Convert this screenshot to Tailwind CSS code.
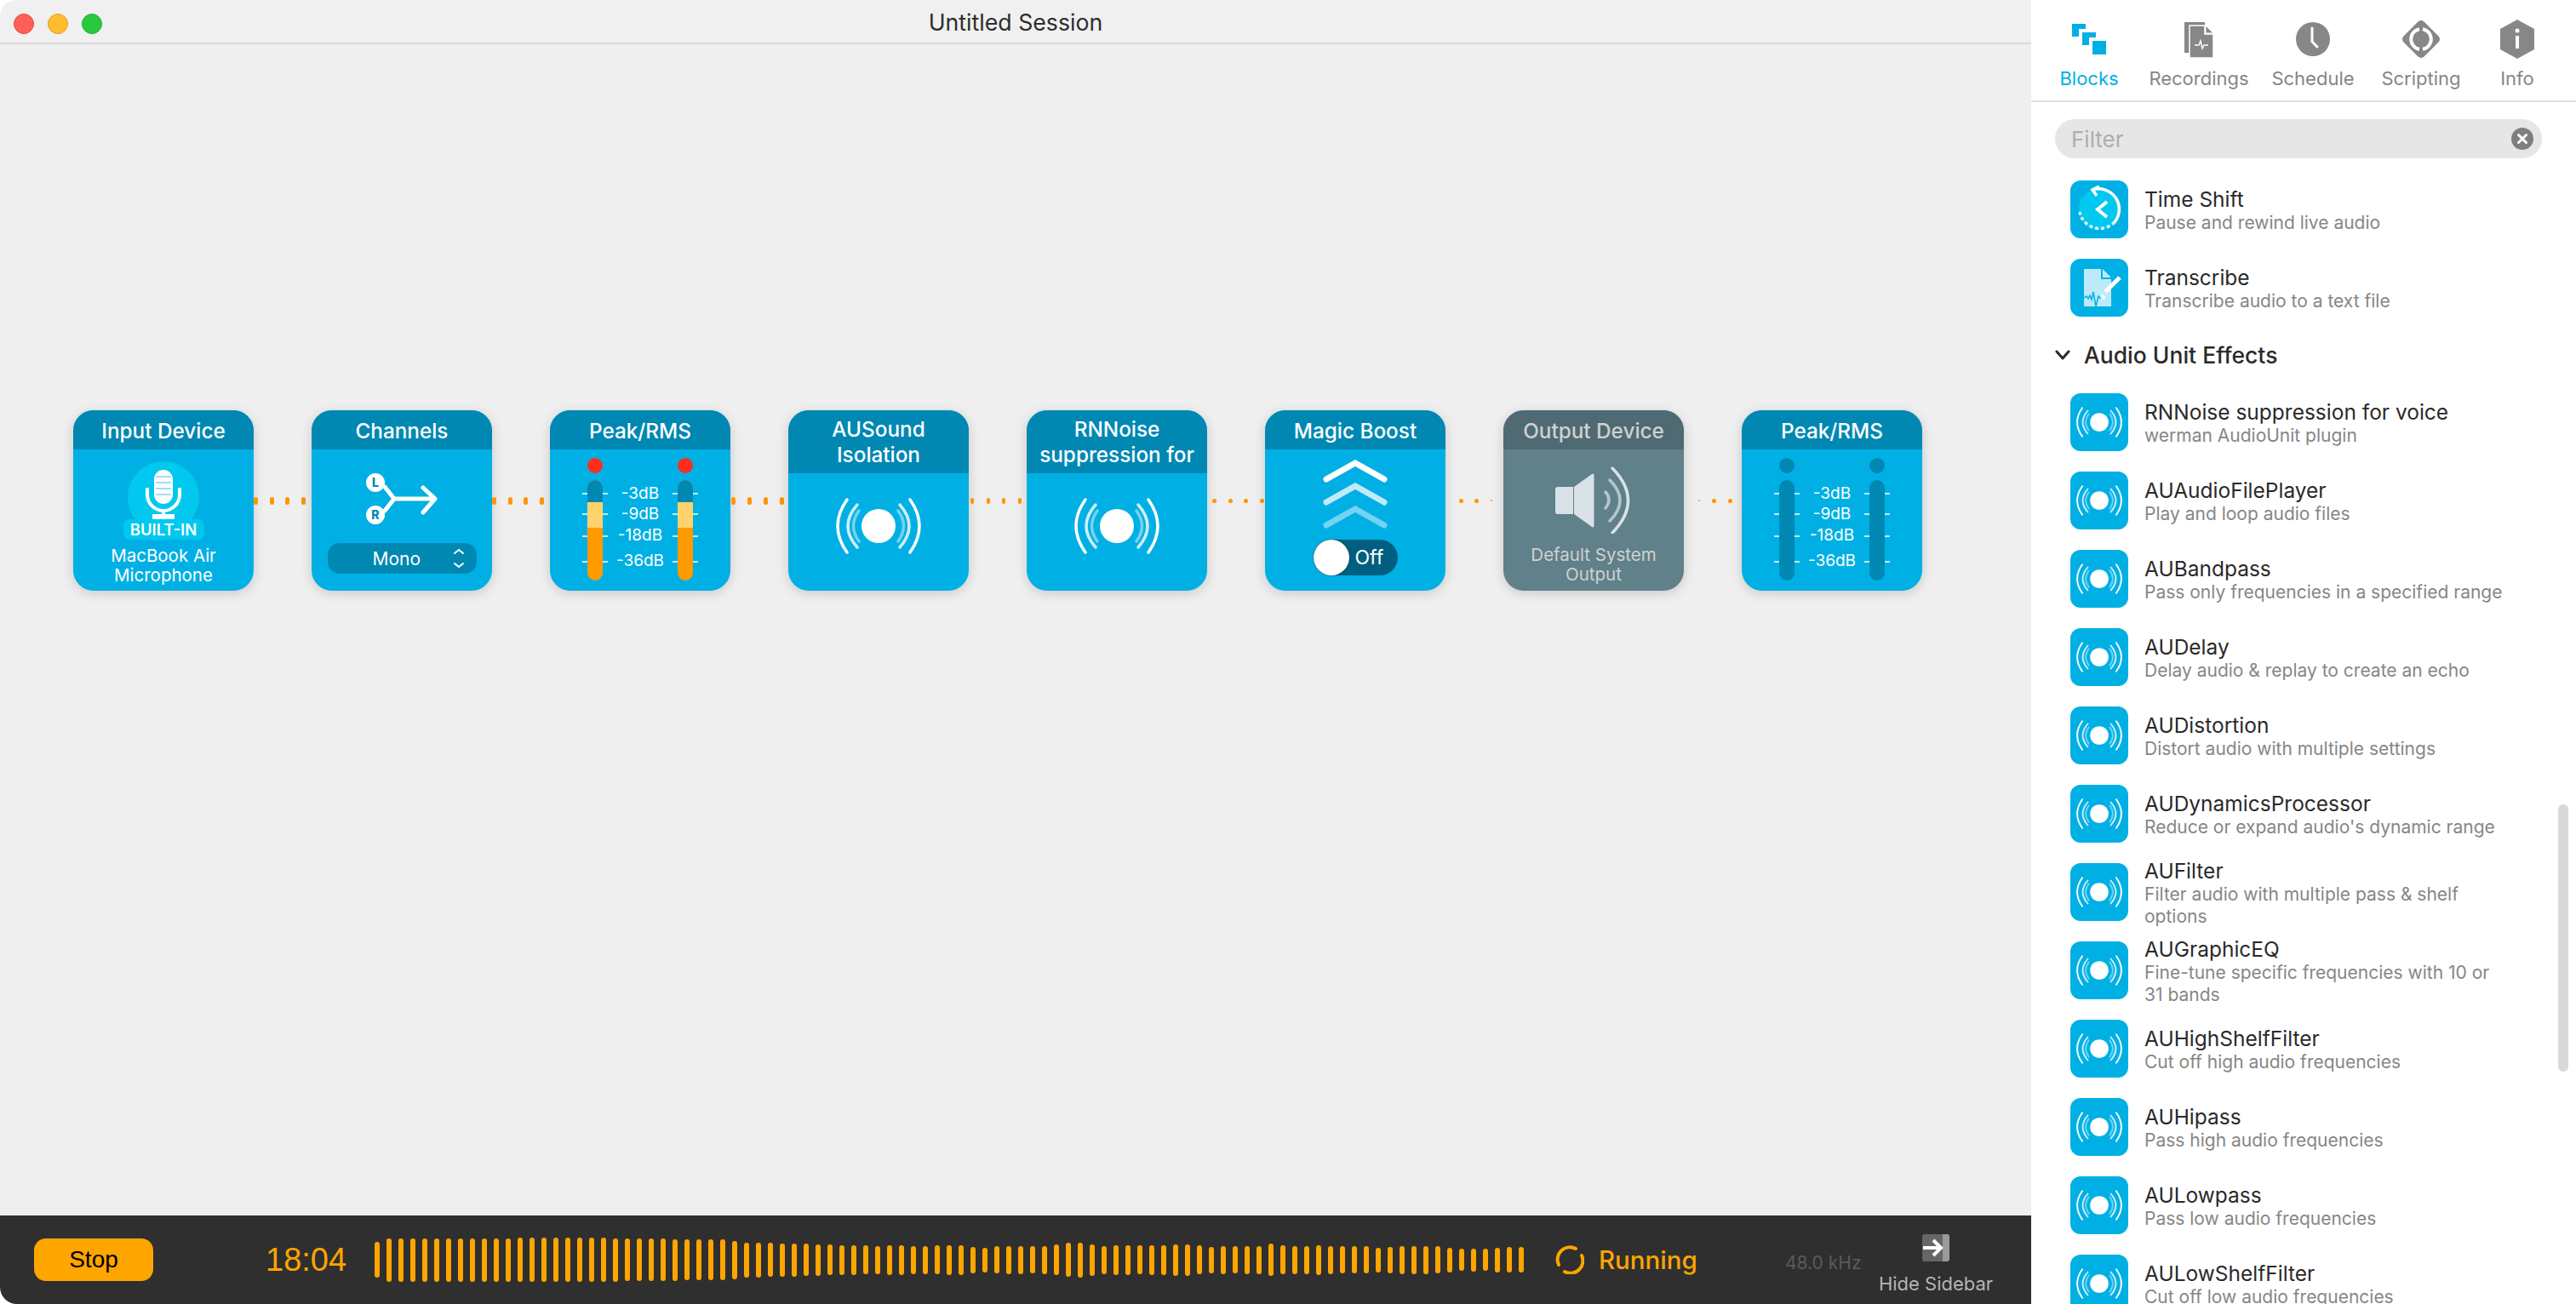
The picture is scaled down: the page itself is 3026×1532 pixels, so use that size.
<!DOCTYPE html>
<html lang="en">
<head>
    <meta charset="UTF-8">
    <title>Untitled Session</title>
    <script src="https://cdn.jsdelivr.net/npm/@tailwindcss/browser@4"></script>
</head>
<body class="bg-white h-screen overflow-hidden font-['Inter',sans-serif]">
    <!-- shared icons -->
    <svg class="hidden">
        <symbol id="sound" viewBox="-50 -50 100 100">
            <circle r="20" fill="#fff"/>
            <g fill="none" stroke="#fff" stroke-linecap="round">
                <path stroke-width="3.5" d="M-37-31Q-59 0-37 31M37-31Q59 0 37 31"/>
                <path stroke-width="3.5" opacity=".8" d="M-25-25Q-47 0-25 25M25-25Q47 0 25 25"/>
                <path stroke-width="3.5" opacity=".45" d="M-23-18Q-36 0-23 18M23-18Q36 0 23 18"/>
            </g>
        </symbol>
        <symbol id="au" viewBox="0 0 68 68">
            <rect width="68" height="68" rx="12" fill="#00b0e4"/>
            <use href="#sound" x="7" y="7" width="54" height="54"/>
        </symbol>
        <symbol id="ticks" viewBox="0 0 30 118">
            <path stroke="#fff" stroke-width="1.5" d="M0 16h30M0 40h30M0 66h30M0 96h30"/>
        </symbol>
    </svg>

    <div class="flex h-[1532px] w-[3026px] rounded-[20px] overflow-hidden bg-white">
        <!-- main -->
        <div class="w-[2386px] shrink-0 flex flex-col bg-[#efefef]">
            <div class="h-[52px] shrink-0 relative flex items-center justify-center border-b-2 border-[#d8d8d8] bg-[#f0f0f0]">
                <div class="absolute left-[16px] top-[16px] flex gap-[16px]">
                    <div class="w-[24px] h-[24px] rounded-full bg-[#ff5f57] border border-[#e5473f]"></div>
                    <div class="w-[24px] h-[24px] rounded-full bg-[#febc2e] border border-[#e0a023]"></div>
                    <div class="w-[24px] h-[24px] rounded-full bg-[#28c840] border border-[#1fae33]"></div>
                </div>
                <span class="pt-[2px] text-[26.7px] text-[#2d2d2d]">Untitled Session</span>
            </div>

            <div class="flex-1 flex items-start pt-[430px] pl-[86px]">
                <!-- Input Device -->
                <div class="w-[212px] h-[212px] shrink-0 rounded-[24px] overflow-hidden bg-[#00b0e4] shadow-[0_3px_14px_rgba(0,0,0,0.16)] flex flex-col items-center text-white">
                    <div class="w-full h-[46px] pt-[2px] bg-[#0088b3] flex items-center justify-center text-[24.3px] font-medium">Input Device</div>
                    <div class="mt-[14px] -mb-[16px] w-[84px] h-[84px] rounded-full bg-[#00c8ee]">
                        <svg class="w-[84px] h-[68px]" viewBox="0 0 84 68">
                            <rect x="31" y="10" width="22" height="40" rx="11" fill="#fff"/>
                            <path stroke="#9fdff3" stroke-width="2" d="M33 18h18M33 25h18M33 32h18M33 39h18"/>
                            <path fill="none" stroke="#fff" stroke-width="4" d="M23 31v8a19 19 0 0 0 38 0v-8M42 58v6"/>
                            <rect x="29" y="62" width="26" height="6" fill="#fff"/>
                        </svg>
                    </div>
                    <div class="relative w-[95px] h-[24px] rounded-[8px] bg-[#00c8ee] flex items-center justify-center text-[18.5px] font-semibold leading-none">BUILT-IN</div>
                    <div class="mt-[7px] text-center text-[20.5px] leading-[23px]">MacBook Air<br>Microphone</div>
                </div>
                <div class="w-[68px] h-[212px] shrink-0 flex items-center gap-[13.5px]">
                    <div class="w-[5px] h-[9px] rounded-full bg-[#ff9500]"></div><div class="w-[5px] h-[9px] rounded-full bg-[#ff9500]"></div><div class="w-[5px] h-[9px] rounded-full bg-[#ff9500]"></div><div class="w-[5px] h-[9px] rounded-full bg-[#ff9500]"></div>
                </div>

                <!-- Channels -->
                <div class="w-[212px] h-[212px] shrink-0 rounded-[24px] overflow-hidden bg-[#00b0e4] shadow-[0_3px_14px_rgba(0,0,0,0.16)] flex flex-col items-center text-white">
                    <div class="w-full h-[46px] pt-[2px] bg-[#0088b3] flex items-center justify-center text-[24.3px] font-medium">Channels</div>
                    <svg class="mt-[30px] w-[100px] h-[60px] overflow-visible" viewBox="0 0 100 60">
                        <path fill="none" stroke="#fff" stroke-width="5" stroke-linecap="round" stroke-linejoin="round" d="M19 9L30 14L41 28L30 42L19 47M41 28H88M75 15L89 28L75 44"/>
                        <circle cx="19" cy="9" r="11" fill="#fff"/>
                        <circle cx="19" cy="47" r="11" fill="#fff"/>
                        <text x="19" y="14" text-anchor="middle" font-size="14" font-weight="800" fill="#0088b3">L</text>
                        <text x="19" y="52" text-anchor="middle" font-size="14" font-weight="800" fill="#0088b3">R</text>
                    </svg>
                    <div class="relative mt-[20px] w-[175px] h-[36px] pt-[2px] rounded-[14px] bg-[#0088b3] flex items-center pl-[53px] text-[21px]">
                        Mono
                        <svg class="absolute right-[14px] top-[5px] w-[14px] h-[26px]" viewBox="0 0 14 26"><path fill="none" stroke="#fff" stroke-width="2" stroke-linecap="round" d="M2 7L7 3L12 7M2 19L7 23L12 19"/></svg>
                    </div>
                </div>
                <div class="w-[68px] h-[212px] shrink-0 flex items-center gap-[13.5px]">
                    <div class="w-[5px] h-[9px] rounded-full bg-[#ff9500]"></div><div class="w-[5px] h-[9px] rounded-full bg-[#ff9500]"></div><div class="w-[5px] h-[9px] rounded-full bg-[#ff9500]"></div><div class="w-[5px] h-[9px] rounded-full bg-[#ff9500]"></div>
                </div>

                <!-- Peak/RMS -->
                <div class="w-[212px] h-[212px] shrink-0 rounded-[24px] overflow-hidden bg-[#00b0e4] shadow-[0_3px_14px_rgba(0,0,0,0.16)] flex flex-col text-white">
                    <div class="w-full h-[46px] pt-[2px] bg-[#0088b3] flex items-center justify-center text-[24.3px] font-medium">Peak/RMS</div>
                    <div class="flex justify-center pt-[10px]">
                        <div class="w-[30px] flex flex-col items-center relative">
                            <div class="w-[18px] h-[18px] rounded-full bg-[#ff2d20]"></div>
                            <svg class="absolute left-0 top-[26px] w-[30px] h-[118px]"><use href="#ticks"/></svg>
                            <div class="relative mt-[8px] w-[18px] h-[118px] rounded-full overflow-hidden flex flex-col bg-[#ff9a00]">
                                <div class="h-[26px] bg-[#0088b3]"></div>
                                <div class="h-[30px] bg-[#ffd36b]"></div>
                            </div>
                        </div>
                        <div class="w-[76px] pt-[26px] text-center text-[19px]">
                            <div class="h-[32px] leading-[32px]">-3dB</div>
                            <div class="h-[24px] leading-[16px]">-9dB</div>
                            <div class="h-[28px] leading-[18px]">-18dB</div>
                            <div class="h-[30px] leading-[22px]">-36dB</div>
                        </div>
                        <div class="w-[30px] flex flex-col items-center relative">
                            <div class="w-[18px] h-[18px] rounded-full bg-[#ff2d20]"></div>
                            <svg class="absolute left-0 top-[26px] w-[30px] h-[118px]"><use href="#ticks"/></svg>
                            <div class="relative mt-[8px] w-[18px] h-[118px] rounded-full overflow-hidden flex flex-col bg-[#ff9a00]">
                                <div class="h-[26px] bg-[#0088b3]"></div>
                                <div class="h-[30px] bg-[#ffd36b]"></div>
                            </div>
                        </div>
                    </div>
                </div>
                <div class="w-[68px] h-[212px] shrink-0 flex items-center pl-[1px] gap-[14px]">
                    <div class="w-[5px] h-[9px] rounded-full bg-[#ff9500]"></div><div class="w-[5px] h-[9px] rounded-full bg-[#ff9500]"></div><div class="w-[5px] h-[9px] rounded-full bg-[#ff9500]"></div><div class="w-[5px] h-[9px] rounded-full bg-[#ff9500]"></div>
                </div>

                <!-- AUSound Isolation -->
                <div class="w-[212px] h-[212px] shrink-0 rounded-[24px] overflow-hidden bg-[#00b0e4] shadow-[0_3px_14px_rgba(0,0,0,0.16)] flex flex-col items-center text-white">
                    <div class="w-full h-[74px] bg-[#0088b3] flex items-center justify-center text-center text-[24.3px] leading-[30px] font-medium">AUSound<br>Isolation</div>
                    <svg class="mt-[12px] w-[100px] h-[100px]"><use href="#sound"/></svg>
                </div>
                <div class="w-[68px] h-[212px] shrink-0 flex items-center pl-[2px] gap-[14.7px]">
                    <div class="w-[4px] h-[7px] rounded-full bg-[#ff9500]"></div><div class="w-[4px] h-[7px] rounded-full bg-[#ff9500]"></div><div class="w-[4px] h-[7px] rounded-full bg-[#ff9500]"></div><div class="w-[4px] h-[7px] rounded-full bg-[#ff9500]"></div>
                </div>

                <!-- RNNoise -->
                <div class="w-[212px] h-[212px] shrink-0 rounded-[24px] overflow-hidden bg-[#00b0e4] shadow-[0_3px_14px_rgba(0,0,0,0.16)] flex flex-col items-center text-white">
                    <div class="w-full h-[74px] bg-[#0088b3] flex items-center justify-center text-center text-[24.3px] leading-[30px] font-medium whitespace-nowrap">RNNoise<br>suppression for</div>
                    <svg class="mt-[12px] w-[100px] h-[100px]"><use href="#sound"/></svg>
                </div>
                <div class="w-[68px] h-[212px] shrink-0 flex items-center pl-[6px] gap-[13.5px]">
                    <div class="w-[5px] h-[5px] rounded-full bg-[#ff9500]"></div><div class="w-[5px] h-[5px] rounded-full bg-[#ff9500]"></div><div class="w-[5px] h-[5px] rounded-full bg-[#ff9500]"></div><div class="w-[5px] h-[5px] rounded-full bg-[#ff9500]"></div>
                </div>

                <!-- Magic Boost -->
                <div class="w-[212px] h-[212px] shrink-0 rounded-[24px] overflow-hidden bg-[#00b0e4] shadow-[0_3px_14px_rgba(0,0,0,0.16)] flex flex-col items-center text-white">
                    <div class="w-full h-[46px] pt-[2px] bg-[#0088b3] flex items-center justify-center text-[24.3px] font-medium">Magic Boost</div>
                    <svg class="mt-[12px] w-[80px] h-[82px]" viewBox="0 0 80 82">
                        <g fill="none" stroke="#fff" stroke-width="7" stroke-linecap="round" stroke-linejoin="miter">
                            <path d="M6 23L40 4L74 23"/>
                            <path opacity=".75" d="M6 50L40 31L74 50"/>
                            <path opacity=".45" d="M6 77L40 58L74 77"/>
                        </g>
                    </svg>
                    <div class="mt-[12px] w-[99px] h-[42px] rounded-full bg-[#005f80] flex items-center">
                        <div class="w-[42px] h-[42px] rounded-full bg-white shadow-[0_0_2px_rgba(0,0,0,0.6)]"></div>
                        <span class="ml-[7px] text-[23px]">Off</span>
                    </div>
                </div>
                <div class="w-[68px] h-[212px] shrink-0 flex items-center pl-[15.5px] gap-[13.5px]">
                    <div class="w-[5px] h-[5px] rounded-full bg-[#ff9500]"></div><div class="w-[5px] h-[5px] rounded-full bg-[#ff9500]"></div><div class="w-[2px] h-[2px] rounded-full bg-[#ff9500]"></div>
                </div>

                <!-- Output Device -->
                <div class="w-[212px] h-[212px] shrink-0 rounded-[24px] overflow-hidden bg-[#60808a] shadow-[0_3px_14px_rgba(0,0,0,0.16)] flex flex-col items-center text-[#d0d0d0]">
                    <div class="w-full h-[46px] pt-[2px] bg-[#4f6a72] flex items-center justify-center text-[24.3px] font-medium">Output Device</div>
                    <svg class="mt-[19px] w-[90px] h-[80px]" viewBox="0 0 90 80">
                        <path fill="#d8e2e6" d="M3 25h18v32H3a3 3 0 0 1-3-3V28a3 3 0 0 1 3-3zM22 25L43 10a1.500 1.500 0 0 1 2.500 1v60a1.500 1.500 0 0 1-2.500 1L22 57z"/>
                        <g fill="none" stroke-linecap="round" stroke-width="3.5">
                            <path stroke="#d8e2e6" d="M67 3Q104 41 67 79"/>
                            <path stroke="#b5c6cc" d="M64 17Q88 41 64 65"/>
                            <path stroke="#b5c6cc" d="M59 31Q67 40 59 50"/>
                        </g>
                    </svg>
                    <div class="mt-[13px] text-center text-[20.5px] leading-[23px]">Default System<br>Output</div>
                </div>
                <div class="w-[68px] h-[212px] shrink-0 flex items-center pl-[17px] gap-[14px]">
                    <div class="w-[2px] h-[2px] rounded-full bg-[#ff9500]"></div><div class="w-[5px] h-[5px] rounded-full bg-[#ff9500]"></div><div class="w-[5px] h-[5px] rounded-full bg-[#ff9500]"></div>
                </div>

                <!-- Peak/RMS, silent -->
                <div class="w-[212px] h-[212px] shrink-0 rounded-[24px] overflow-hidden bg-[#00b0e4] shadow-[0_3px_14px_rgba(0,0,0,0.16)] flex flex-col text-white">
                    <div class="w-full h-[46px] pt-[2px] bg-[#0088b3] flex items-center justify-center text-[24.3px] font-medium">Peak/RMS</div>
                    <div class="flex justify-center pt-[10px]">
                        <div class="w-[30px] flex flex-col items-center relative">
                            <div class="w-[18px] h-[18px] rounded-full bg-[#0088b3]"></div>
                            <svg class="absolute left-0 top-[26px] w-[30px] h-[118px]"><use href="#ticks"/></svg>
                            <div class="relative mt-[8px] w-[18px] h-[118px] rounded-full bg-[#0088b3]"></div>
                        </div>
                        <div class="w-[76px] pt-[26px] text-center text-[19px]">
                            <div class="h-[32px] leading-[32px]">-3dB</div>
                            <div class="h-[24px] leading-[16px]">-9dB</div>
                            <div class="h-[28px] leading-[18px]">-18dB</div>
                            <div class="h-[30px] leading-[22px]">-36dB</div>
                        </div>
                        <div class="w-[30px] flex flex-col items-center relative">
                            <div class="w-[18px] h-[18px] rounded-full bg-[#0088b3]"></div>
                            <svg class="absolute left-0 top-[26px] w-[30px] h-[118px]"><use href="#ticks"/></svg>
                            <div class="relative mt-[8px] w-[18px] h-[118px] rounded-full bg-[#0088b3]"></div>
                        </div>
                    </div>
                </div>
            </div>

            <!-- status bar -->
            <div class="h-[104px] shrink-0 bg-[#2f2f2f] flex items-center font-['Liberation_Sans',sans-serif]">
                <button class="ml-[40px] w-[140px] h-[50px] rounded-[14px] bg-[#ffa500] text-black text-[28px]">Stop</button>
                <span class="ml-[132px] w-[128px] text-[38px] text-[#ffa500]">18:04</span>
                <div id="wave" class="flex items-center h-[60px] w-[1358px]"></div>
                <svg class="ml-[29px] w-[34px] h-[34px]" viewBox="0 0 34 34"><path fill="none" stroke="#ffa500" stroke-width="4" stroke-linecap="round" d="M4 23A14.5 14.5 0 0 1 24 4M31 12A14.5 14.5 0 0 1 11 31"/></svg>
                <span class="ml-[17px] w-[219px] text-[29.5px] font-medium text-[#ffa500] font-['Inter',sans-serif]">Running</span>
                <span class="w-[110px] pt-[8px] text-[21px] text-[#5a5a5a] font-['Inter',sans-serif]">48.0 kHz</span>
                <div class="w-[134px] pt-[12px] flex flex-col items-center font-['Inter',sans-serif]">
                    <svg class="w-[32px] h-[32px]" viewBox="0 0 32 32">
                        <rect width="32" height="32" rx="3" fill="#666"/>
                        <path d="M24 0h5a3 3 0 0 1 3 3v26a3 3 0 0 1-3 3h-5z" fill="#9a9a9a"/>
                        <path fill="none" stroke="#fff" stroke-width="4" d="M1 16h20M13 7l9 9-9 9"/>
                    </svg>
                    <span class="mt-[12px] text-[22px] leading-[28px] text-[#b5b5b5] whitespace-nowrap">Hide Sidebar</span>
                </div>
            </div>
        </div>

        <!-- sidebar -->
        <div class="flex-1 relative bg-white flex flex-col overflow-hidden">
            <div class="h-[120px] shrink-0 border-b-2 border-[#e0e0e0] flex pl-[4px] text-[22px] text-[#868686]">
                <div class="w-[128px] flex flex-col items-center text-[#00b0e4]">
                    <svg class="mt-[28px] w-[40px] h-[36px]" viewBox="0 0 40 36">
                        <rect width="16" height="15" fill="#00b0e4"/>
                        <rect x="8" y="6" width="20" height="19" fill="#fff"/>
                        <rect x="12" y="10" width="16" height="15" fill="#00b0e4"/>
                        <rect x="20" y="16" width="20" height="20" fill="#fff"/>
                        <rect x="24" y="20" width="16" height="16" fill="#00b0e4"/>
                    </svg>
                    <span class="mt-[14px] leading-[28px]">Blocks</span>
                </div>
                <div class="w-[130px] flex flex-col items-center">
                    <svg class="mt-[26px] w-[34px] h-[42px]" viewBox="0 0 34 42">
                        <rect width="29" height="36" fill="#878787"/>
                        <path fill="#878787" stroke="#fff" stroke-width="1.5" d="M6 4H24V14H34V42H6z"/>
                        <path fill="#fff" d="M24 0h10v14H24z"/>
                        <path fill="#878787" d="M25.500 5L33 12.500H25.500z"/>
                        <path fill="none" stroke="#fff" stroke-width="1.5" d="M12 27h5l2-5 2 9 2-4h5"/>
                    </svg>
                    <span class="mt-[10px] leading-[28px]">Recordings</span>
                </div>
                <div class="w-[138px] flex flex-col items-center">
                    <svg class="mt-[26px] w-[40px] h-[40px]" viewBox="0 0 40 40">
                        <circle cx="20" cy="20" r="20" fill="#878787"/>
                        <path fill="none" stroke="#fff" stroke-width="3" stroke-linecap="round" d="M19 7v16l6 6"/>
                    </svg>
                    <span class="mt-[12px] leading-[28px]">Schedule</span>
                </div>
                <div class="w-[116px] flex flex-col items-center">
                    <svg class="mt-[23px] w-[46px] h-[46px]" viewBox="0 0 46 46">
                        <rect x="6" y="6" width="34" height="34" rx="5" transform="rotate(45 23 23)" fill="#878787"/>
                        <path fill="none" stroke="#fff" stroke-width="4" d="M21 11.200A12 12 0 0 0 21 34.800M25 11.200A12 12 0 0 1 25 34.800"/>
                    </svg>
                    <span class="mt-[9px] leading-[28px]">Scripting</span>
                </div>
                <div class="w-[110px] flex flex-col items-center">
                    <svg class="mt-[23px] w-[40px] h-[46px]" viewBox="0 0 40 46">
                        <path fill="#878787" d="M20 0L40 11V35L20 46L0 35V11z"/>
                        <circle cx="20" cy="13" r="2.5" fill="#fff"/>
                        <rect x="18" y="19" width="4" height="15" fill="#fff"/>
                    </svg>
                    <span class="mt-[9px] leading-[28px]">Info</span>
                </div>
            </div>

            <div class="mx-[28px] mt-[20px] h-[46px] w-[572px] shrink-0 rounded-full bg-[#e6e6e6] flex items-center justify-between pl-[19px] pr-[10px]">
                <span class="text-[26px] text-[#adadad]">Filter</span>
                <svg class="w-[26px] h-[26px]" viewBox="0 0 26 26"><circle cx="13" cy="13" r="13" fill="#7f7f7f"/><path stroke="#fff" stroke-width="3" stroke-linecap="round" d="M8.500 8.500l9 9M17.500 8.500l-9 9"/></svg>
            </div>

            <div class="mt-[14px] flex-1 overflow-hidden w-[555px] text-[#2a2a2a]">
                <div class="flex items-center h-[92px] pl-[46px] gap-[19px]">
                    <svg class="w-[68px] h-[68px] shrink-0" viewBox="0 0 68 68">
                        <rect width="68" height="68" rx="12" fill="#00b0e4"/>
                        <circle cx="34" cy="34" r="24" fill="#00c8ee"/>
                        <path fill="none" stroke="#fff" stroke-width="3.500" d="M26 11A24 24 0 0 1 52 49M34 7L26 11L31 18"/>
                        <path fill="none" stroke="#dff5fc" stroke-width="3.500" stroke-dasharray="4 3" d="M52 49A24 24 0 0 1 11 37"/>
                        <path fill="none" stroke="#fff" stroke-width="4" d="M43 25L32 34L43 43"/>
                    </svg>
                    <div class="min-w-0 pt-[2px]">
                        <div class="text-[24.5px] leading-[28px] whitespace-nowrap">Time Shift</div>
                        <div class="mt-[1px] text-[21px] leading-[26px] text-[#868686] whitespace-nowrap">Pause and rewind live audio</div>
                    </div>
                </div>
                <div class="flex items-center h-[92px] pl-[46px] gap-[19px]">
                    <svg class="w-[68px] h-[68px] shrink-0" viewBox="0 0 68 68">
                        <rect width="68" height="68" rx="12" fill="#00b0e4"/>
                        <path fill="#bdeaf9" d="M16 12H36V24H48V56H16zM38 12L48 22H38z"/>
                        <path fill="none" stroke="#00b0e4" stroke-width="1.500" d="M16 46l3-2 2 3 2-4 2 5 2-9 3 17 3-12 3 3"/>
                        <path fill="none" stroke="#fff" stroke-width="5" d="M41 39L58 22"/>
                        <path fill="#fff" d="M36 48l1-7 5 5z"/>
                    </svg>
                    <div class="min-w-0 pt-[2px]">
                        <div class="text-[24.5px] leading-[28px] whitespace-nowrap">Transcribe</div>
                        <div class="mt-[1px] text-[21px] leading-[26px] text-[#868686] whitespace-nowrap">Transcribe audio to a text file</div>
                    </div>
                </div>

                <div class="h-[66px] flex items-center pl-[28px]">
                    <svg class="w-[18px] h-[12px]" viewBox="0 0 18 12"><path fill="none" stroke="#2a2a2a" stroke-width="3" stroke-linecap="round" stroke-linejoin="round" d="M2 2l7 8 7-8"/></svg>
                    <span class="ml-[16px] pt-[2px] text-[26.5px] font-medium">Audio Unit Effects</span>
                </div>

                <div class="flex items-center h-[92px] pl-[46px] gap-[19px]">
                    <svg class="w-[68px] h-[68px] shrink-0"><use href="#au"/></svg>
                    <div class="min-w-0 pt-[2px]"><div class="text-[24.5px] leading-[28px] whitespace-nowrap">RNNoise suppression for voice</div><div class="mt-[1px] text-[21px] leading-[26px] text-[#868686] whitespace-nowrap">werman AudioUnit plugin</div></div>
                </div>
                <div class="flex items-center h-[92px] pl-[46px] gap-[19px]">
                    <svg class="w-[68px] h-[68px] shrink-0"><use href="#au"/></svg>
                    <div class="min-w-0 pt-[2px]"><div class="text-[24.5px] leading-[28px] whitespace-nowrap">AUAudioFilePlayer</div><div class="mt-[1px] text-[21px] leading-[26px] text-[#868686] whitespace-nowrap">Play and loop audio files</div></div>
                </div>
                <div class="flex items-center h-[92px] pl-[46px] gap-[19px]">
                    <svg class="w-[68px] h-[68px] shrink-0"><use href="#au"/></svg>
                    <div class="min-w-0 pt-[2px]"><div class="text-[24.5px] leading-[28px] whitespace-nowrap">AUBandpass</div><div class="mt-[1px] w-[421px] text-[21px] leading-[26px] text-[#868686] whitespace-nowrap overflow-hidden">Pass only frequencies in a specified range</div></div>
                </div>
                <div class="flex items-center h-[92px] pl-[46px] gap-[19px]">
                    <svg class="w-[68px] h-[68px] shrink-0"><use href="#au"/></svg>
                    <div class="min-w-0 pt-[2px]"><div class="text-[24.5px] leading-[28px] whitespace-nowrap">AUDelay</div><div class="mt-[1px] text-[21px] leading-[26px] text-[#868686] whitespace-nowrap">Delay audio &amp; replay to create an echo</div></div>
                </div>
                <div class="flex items-center h-[92px] pl-[46px] gap-[19px]">
                    <svg class="w-[68px] h-[68px] shrink-0"><use href="#au"/></svg>
                    <div class="min-w-0 pt-[2px]"><div class="text-[24.5px] leading-[28px] whitespace-nowrap">AUDistortion</div><div class="mt-[1px] text-[21px] leading-[26px] text-[#868686] whitespace-nowrap">Distort audio with multiple settings</div></div>
                </div>
                <div class="flex items-center h-[92px] pl-[46px] gap-[19px]">
                    <svg class="w-[68px] h-[68px] shrink-0"><use href="#au"/></svg>
                    <div class="min-w-0 pt-[2px]"><div class="text-[24.5px] leading-[28px] whitespace-nowrap">AUDynamicsProcessor</div><div class="mt-[1px] text-[21px] leading-[26px] text-[#868686] whitespace-nowrap">Reduce or expand audio's dynamic range</div></div>
                </div>
                <div class="flex items-center h-[92px] pl-[46px] gap-[19px]">
                    <svg class="w-[68px] h-[68px] shrink-0"><use href="#au"/></svg>
                    <div class="min-w-0 pt-[2px]"><div class="text-[24.5px] leading-[28px] whitespace-nowrap">AUFilter</div><div class="mt-[1px] text-[21px] leading-[26px] text-[#868686] whitespace-nowrap">Filter audio with multiple pass &amp; shelf<br>options</div></div>
                </div>
                <div class="flex items-center h-[92px] pl-[46px] gap-[19px]">
                    <svg class="w-[68px] h-[68px] shrink-0"><use href="#au"/></svg>
                    <div class="min-w-0 pt-[2px]"><div class="text-[24.5px] leading-[28px] whitespace-nowrap">AUGraphicEQ</div><div class="mt-[1px] text-[21px] leading-[26px] text-[#868686] whitespace-nowrap">Fine-tune specific frequencies with 10 or<br>31 bands</div></div>
                </div>
                <div class="flex items-center h-[92px] pl-[46px] gap-[19px]">
                    <svg class="w-[68px] h-[68px] shrink-0"><use href="#au"/></svg>
                    <div class="min-w-0 pt-[2px]"><div class="text-[24.5px] leading-[28px] whitespace-nowrap">AUHighShelfFilter</div><div class="mt-[1px] text-[21px] leading-[26px] text-[#868686] whitespace-nowrap">Cut off high audio frequencies</div></div>
                </div>
                <div class="flex items-center h-[92px] pl-[46px] gap-[19px]">
                    <svg class="w-[68px] h-[68px] shrink-0"><use href="#au"/></svg>
                    <div class="min-w-0 pt-[2px]"><div class="text-[24.5px] leading-[28px] whitespace-nowrap">AUHipass</div><div class="mt-[1px] text-[21px] leading-[26px] text-[#868686] whitespace-nowrap">Pass high audio frequencies</div></div>
                </div>
                <div class="flex items-center h-[92px] pl-[46px] gap-[19px]">
                    <svg class="w-[68px] h-[68px] shrink-0"><use href="#au"/></svg>
                    <div class="min-w-0 pt-[2px]"><div class="text-[24.5px] leading-[28px] whitespace-nowrap">AULowpass</div><div class="mt-[1px] text-[21px] leading-[26px] text-[#868686] whitespace-nowrap">Pass low audio frequencies</div></div>
                </div>
                <div class="flex items-center h-[92px] pl-[46px] gap-[19px]">
                    <svg class="w-[68px] h-[68px] shrink-0"><use href="#au"/></svg>
                    <div class="min-w-0 pt-[2px]"><div class="text-[24.5px] leading-[28px] whitespace-nowrap">AULowShelfFilter</div><div class="mt-[1px] text-[21px] leading-[26px] text-[#868686] whitespace-nowrap">Cut off low audio frequencies</div></div>
                </div>
            </div>

            <!-- scrollbar -->
            <div class="absolute left-[619px] top-[945px] w-[12px] h-[314px] rounded-full bg-[#d9d9d9]"></div>
        </div>
    </div>

    <script>
        const bars = [42,51,51,51,51,51,51,51,51,51,51,51,52,52,52,52,52,52,52,52,51,50,50,50,50,49,48,48,48,48,45,41,
            41,40,39,39,38,37,36,35,35,34,33,35,35,33,33,34,35,35,31,29,32,33,33,32,33,36,40,41,37,33,35,35,
            34,35,35,37,37,34,31,33,32,33,33,38,34,33,33,35,33,32,32,32,29,31,33,33,33,32,29,26,27,26,29,30,30];
        const wave = document.getElementById("wave");
        bars.forEach(h => {
            const bar = document.createElement("div");
            bar.className = "w-[6px] mr-[8px] shrink-0 rounded-full bg-[#ffa500]";
            bar.style.height = h + "px";
            wave.appendChild(bar);
        });
    </script>
</body>
</html>
